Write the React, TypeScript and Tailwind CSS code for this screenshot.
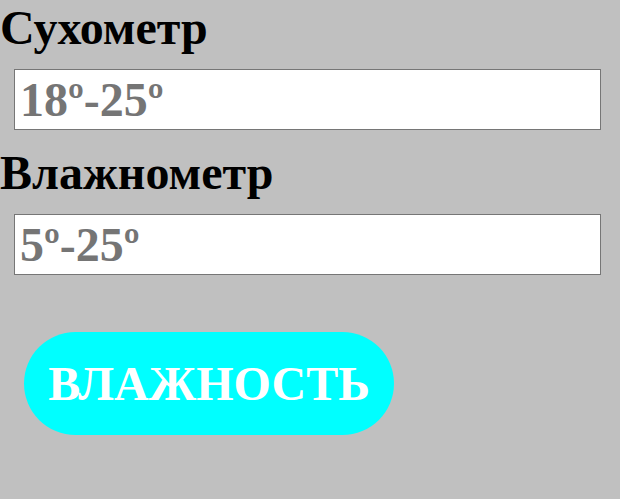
import React from "react";

export default function App() {
  return (
    <div className="w-[620px] h-[499px] bg-[#c0c0c0] overflow-hidden font-['Liberation_Serif','Times_New_Roman',serif]">
      <h1 className="m-0 text-[48px] leading-[56px] font-bold text-black">Сухометр</h1>
      <div className="pl-[14px] pr-[19px] mt-[13px]">
        <div className="h-[61px] bg-white border border-[#767676] flex items-center pl-[5px] text-[48px] font-bold text-[#757575]">
          18º-25º
        </div>
      </div>
      <h1 className="m-0 mt-[15px] text-[48px] leading-[56px] font-bold text-black">Влажнометр</h1>
      <div className="pl-[14px] pr-[19px] mt-[13px]">
        <div className="h-[61px] bg-white border border-[#767676] flex items-center pl-[5px] text-[48px] font-bold text-[#757575]">
          5º-25º
        </div>
      </div>
      <div className="pl-[24px] mt-[57px]">
        <button className="w-[370px] h-[103px] rounded-full bg-[#00ffff] text-white text-[48px] font-bold flex items-center justify-center">
          ВЛАЖНОСТЬ
        </button>
      </div>
    </div>
  );
}
